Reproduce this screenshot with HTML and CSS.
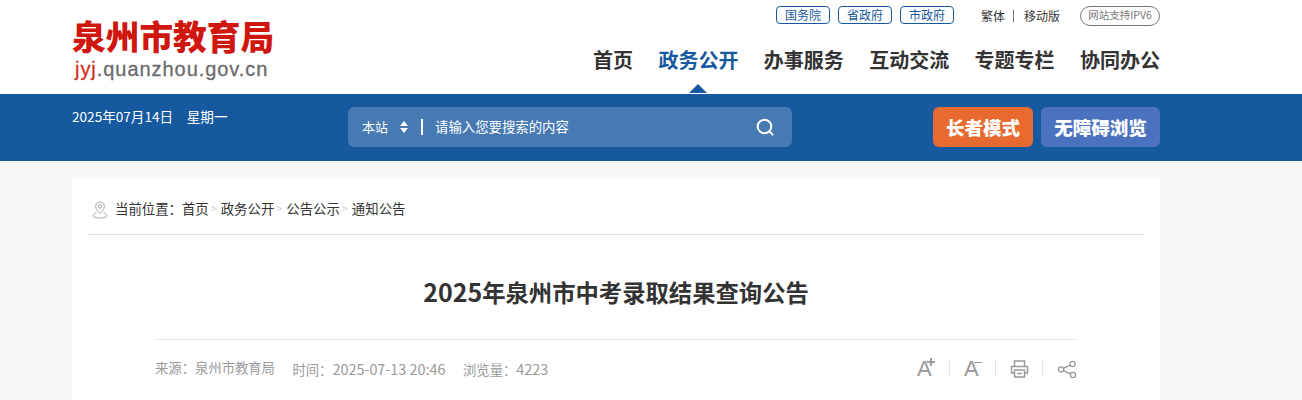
FILE: index.html
```html
<!DOCTYPE html>
<html lang="zh-CN">
  <head>
    <meta charset="UTF-8">
    <title>2025年泉州市中考录取结果查询公告</title>
    <link rel="stylesheet" href="styles.css">
  </head>
  <body>
    <header class="header">
      <div class="wrap header_in">
        <div class="logo">
          <div class="logo_name">泉州市教育局</div>
          <div class="logo_url"><span>jyj</span>.quanzhou.gov.cn</div>
        </div>
        <div class="header_right">
          <div class="toplinks">
            <a class="pill">国务院</a>
            <a class="pill">省政府</a>
            <a class="pill">市政府</a>
            <a class="plain first">繁体</a>
            <i class="sep"></i>
            <a class="plain">移动版</a>
            <span class="ipv6">网站支持IPV6</span>
          </div>
          <ul class="nav">
            <li>首页</li>
            <li class="on">政务公开</li>
            <li>办事服务</li>
            <li>互动交流</li>
            <li>专题专栏</li>
            <li>协同办公</li>
          </ul>
        </div>
      </div>
    </header>

    <div class="bluebar">
      <div class="wrap bluebar_in">
        <div class="date">2025年07月14日　星期一</div>
        <div class="search">
          <span class="scope">本站</span>
          <span class="arrows"></span>
          <i class="bar"></i>
          <span class="holder">请输入您要搜索的内容</span>
          <svg class="search_icon" width="20" height="20" viewBox="0 0 20 20" fill="none" stroke="#fff" stroke-width="2">
            <circle cx="9.5" cy="9.5" r="6.8"/>
            <path d="M14.5 14.5l3 3" stroke-linecap="round"/>
          </svg>
        </div>
        <div class="btns">
          <a class="btn orange">长者模式</a>
          <a class="btn blue">无障碍浏览</a>
        </div>
      </div>
    </div>

    <div class="wrap card">
      <div class="crumb">
        <svg class="pin" width="16" height="18" viewBox="0 0 16 18" fill="none" stroke="#aaa" stroke-width="1">
          <path d="M8 12.5C5.5 9.8 3.6 7.8 3.6 5.4a4.4 4.4 0 0 1 8.8 0c0 2.400-1.900 4.400-4.400 7.100z"/>
          <circle cx="8" cy="5.400" r="1.800"/>
          <path d="M4.500 11.500C2.500 12.300 1 13.500 1 14.700c0 1.300 3 2.300 7 2.300s7-1 7-2.300c0-1.200-1.500-2.400-3.500-3.200"/>
        </svg>
        <span>当前位置：</span><a>首页</a><em>&gt;</em><a>政务公开</a><em>&gt;</em><a>公告公示</a><em>&gt;</em><a>通知公告</a>
      </div>
      <div class="article">
        <h1 class="title"><span class="title_num">2025</span>年泉州市中考录取结果查询公告</h1>
        <div class="meta">
          <div class="meta_text">
            <span>来源：泉州市教育局</span>
            <span>时间：<b>2025-07-13 20:46</b></span>
            <span>浏览量：<b>4223</b></span>
          </div>
          <div class="tools">
            <a class="font_tool bigger">A</a>
            <i class="tool_sep"></i>
            <a class="font_tool smaller">A</a>
            <i class="tool_sep"></i>
            <svg class="tool" width="19" height="20" viewBox="0.5 0 19 20" fill="none" stroke="#999" stroke-width="1.500">
              <path d="M5 7V2h10v5"/>
              <path d="M5 14H2V7.500h16V14h-3"/>
              <rect x="5" y="11" width="10" height="7"/>
              <path d="M7.500 14.500h5"/>
            </svg>
            <i class="tool_sep"></i>
            <svg class="tool" width="20" height="20" viewBox="0 0 20 20" fill="none" stroke="#999" stroke-width="1.300">
              <circle cx="4" cy="10.500" r="2.600"/>
              <circle cx="15.500" cy="5" r="2.600"/>
              <circle cx="16" cy="16" r="2.600"/>
              <path d="M6.300 9.300l6.900-3.200M6.300 11.700l7.300 3.200"/>
            </svg>
          </div>
        </div>
      </div>
    </div>
  </body>
</html>
```

FILE: styles.css
```css
*{
  padding: 0;
  margin: 0;
  list-style: none;
  text-decoration: none;
  box-sizing: border-box;
}
html,body{
  height: 400px;
  overflow: hidden;
}
body{
  background: #f7f7f7;
  color: #333;
  font-family: "Noto Sans CJK SC", "Liberation Sans", sans-serif;
  font-size: 13.330px;
}
.wrap{
  width: 1088px;
  margin-left: 72px;
}

.header{
  height: 94px;
  background: #fff;
}
.header_in{
  display: flex;
  justify-content: space-between;
}
.logo{
  padding-top: 16px;
}
.logo_name{
  width: 204px;
  color: #d0170f;
  font-size: 33.700px;
  font-weight: 900;
  line-height: 40px;
  white-space: nowrap;
}
.logo_url{
  margin-top: 1px;
  margin-left: 3px;
  color: #6b6b6b;
  font-family: "Liberation Sans", sans-serif;
  font-size: 20px;
  line-height: 24px;
  letter-spacing: .95px;
  -webkit-text-stroke: .3px #6b6b6b;
}
.logo_url span{
  color: #cf2f22;
  -webkit-text-stroke: .3px #cf2f22;
}

.toplinks{
  display: flex;
  justify-content: flex-end;
  align-items: center;
  height: 20px;
  margin-top: 6px;
  font-size: 12px;
}
.pill{
  width: 54px;
  height: 18px;
  margin-right: 8px;
  margin-top: -2px;
  border: 1px solid #16599f;
  border-radius: 4px;
  color: #16599f;
  text-align: center;
  line-height: 16px;
}
.plain{
  color: #333;
  line-height: 18px;
}
.first{
  margin-left: 19px;
}
.sep{
  width: 1px;
  height: 12px;
  margin: 0 10px 0 8px;
  background: #777;
}
.ipv6{
  width: 80px;
  height: 20px;
  margin-left: 20px;
  border: 1px solid #777;
  border-radius: 10px;
  color: #777;
  font-size: 10.500px;
  text-align: center;
  line-height: 16px;
}
.nav{
  display: flex;
  justify-content: flex-end;
  gap: 25.400px;
  margin-top: 19px;
}
.nav li{
  position: relative;
  color: #333;
  font-size: 20px;
  font-weight: 700;
  line-height: 30px;
  white-space: nowrap;
}
.nav .on{
  color: #16599f;
}
.nav .on:after{
  content: "";
  position: absolute;
  left: 31px;
  top: 39px;
  border-left: 9px solid transparent;
  border-right: 9px solid transparent;
  border-bottom: 9px solid #16599f;
}

.bluebar{
  height: 67px;
  background: #16599f;
}
.bluebar_in{
  display: flex;
  align-items: flex-start;
  padding-top: 13px;
}
.date{
  width: 276px;
  margin-top: -1px;
  color: #fff;
  font-size: 13.600px;
  line-height: 20px;
}
.search{
  display: flex;
  align-items: center;
  width: 444px;
  height: 40px;
  padding-left: 14px;
  background: #4779b3;
  border-radius: 6px;
  color: #fff;
  font-size: 13px;
}
.scope{
  width: 38px;
  margin-top: -1px;
}
.arrows{
  position: relative;
  width: 21px;
  height: 12px;
}
.arrows:before,.arrows:after{
  content: "";
  position: absolute;
  left: 0;
  border-left: 4px solid transparent;
  border-right: 4px solid transparent;
}
.arrows:before{
  top: 0;
  border-bottom: 5px solid #fff;
}
.arrows:after{
  bottom: 0;
  border-top: 5px solid #fff;
}
.bar{
  width: 2px;
  height: 16px;
  background: #fff;
}
.holder{
  margin-left: 12px;
  margin-bottom: 3px;
  font-size: 13.400px;
}
.search_icon{
  margin-left: auto;
  margin-right: 17px;
}
.btns{
  display: flex;
  gap: 8px;
  margin-left: 141px;
}
.btn{
  height: 40px;
  border-radius: 6px;
  color: #fff;
  font-size: 18.500px;
  font-weight: 900;
  text-align: center;
  line-height: 40px;
}
.orange{
  width: 100px;
  background: #e86a31;
}
.blue{
  width: 119px;
  background: #4a72bf;
}

.card{
  height: 240px;
  margin-top: 17px;
  padding: 0 16px;
  background: #fff;
}
.crumb{
  display: flex;
  align-items: center;
  height: 57px;
  padding-top: 6px;
  padding-bottom: 2px;
  border-bottom: 1px solid #dfdfdf;
  color: #333;
  font-size: 13.400px;
}
.pin{
  margin: 3px 7px 0 4px;
}
.crumb em{
  width: 12px;
  padding-left: 2px;
  color: #ccc;
  font-style: normal;
  font-size: 11px;
}
.article{
  padding: 0 67px;
}
.title{
  height: 105px;
  border-bottom: 1px solid #e5e5e5;
  color: #333;
  font-size: 23.330px;
  font-weight: 700;
  text-align: center;
  line-height: 113px;
}
.title_num{
  font-size: 25px;
}
.meta{
  display: flex;
  justify-content: space-between;
  align-items: center;
  height: 57px;
  color: #999;
}
.meta_text{
  display: flex;
  gap: 17.500px;
  margin-top: -1px;
}
.meta_text b{
  font-size: 14.400px;
  font-weight: 400;
}
.tools{
  display: flex;
  align-items: center;
}
.tool{
  display: block;
}
.font_tool{
  position: relative;
  display: block;
  width: 18px;
  color: #999;
  font-family: "Liberation Sans", sans-serif;
  font-size: 22px;
  line-height: 20px;
}
.bigger{
  width: 19px;
}
/* plus and minus marks beside the A, drawn as two small bars */
.bigger:before,.bigger:after,.smaller:after{
  content: "";
  position: absolute;
  background: #999;
}
.bigger:before{
  left: 10px;
  top: 2px;
  width: 8px;
  height: 2px;
}
.bigger:after{
  left: 13px;
  top: -1px;
  width: 2px;
  height: 8px;
}
.smaller:after{
  left: 10px;
  top: 3px;
  width: 8px;
  height: 1.500px;
}
.tool_sep{
  width: 1px;
  height: 15px;
  margin: 0 14px 0 13px;
  background: #e2e2e2;
}
```
